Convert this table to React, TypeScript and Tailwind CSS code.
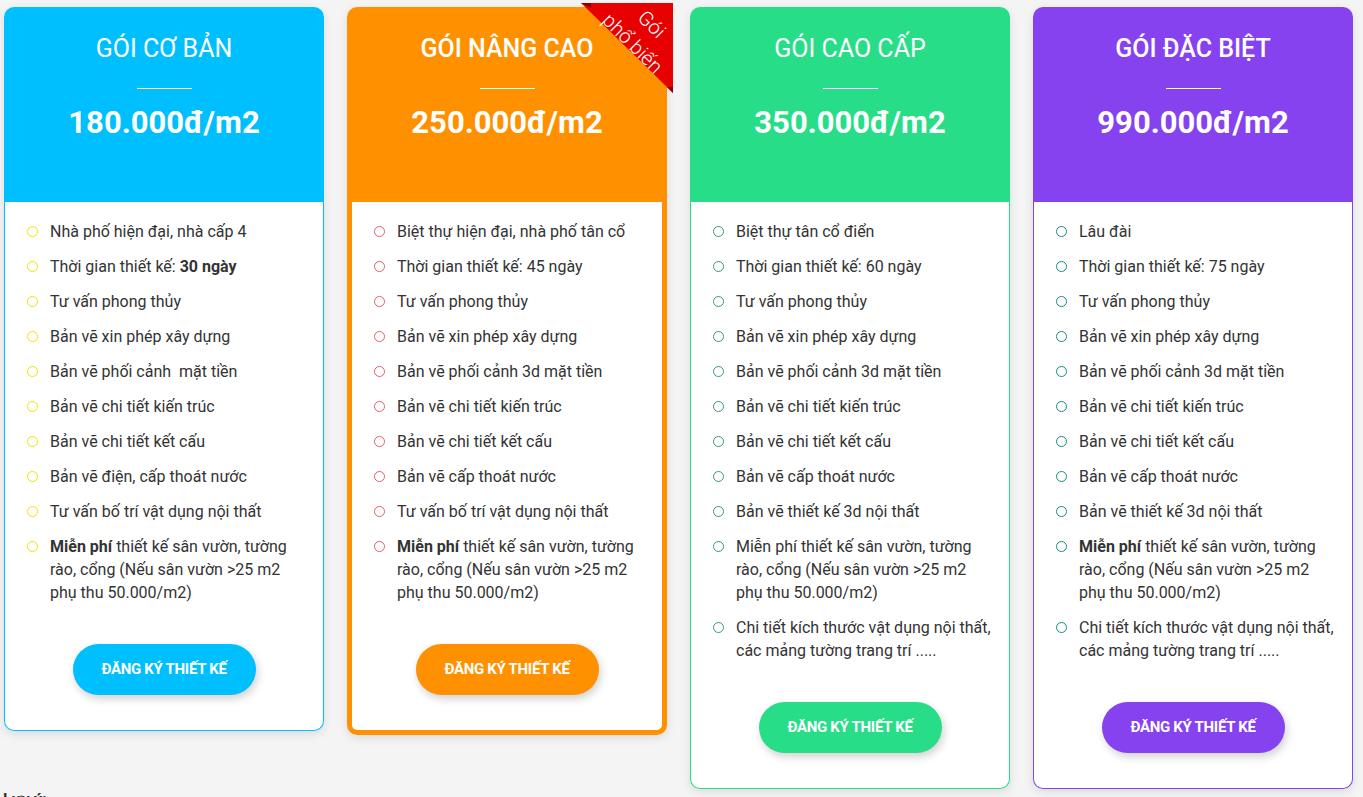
import React from "react";

type Plan = {
  title: string;
  price: string;
  titleWeight: string;
  header: string;
  border: string;
  bullet: string;
  button: string;
  featured?: boolean;
  items: React.ReactNode[];
};

const freeGarden = (bold: boolean) => (
  <>
    {bold ? <b className="font-bold">Miễn phí</b> : "Miễn phí"} thiết kế sân vườn, tường
    <br />
    rào, cổng (Nếu sân vườn &gt;25 m2
    <br />
    phụ thu 50.000/m2)
  </>
);

const detail = "Chi tiết kích thước vật dụng nội thất, các mảng tường trang trí .....";

const plans: Plan[] = [
  {
    title: "GÓI CƠ BẢN",
    price: "180.000đ/m2",
    titleWeight: "font-normal",
    header: "bg-[#00bfff]",
    border: "border border-t-0 border-[#00bfff]",
    bullet: "border-[#f2e400]",
    button: "bg-[#00bfff]",
    items: [
      "Nhà phố hiện đại, nhà cấp 4",
      <>
        Thời gian thiết kế: <b className="font-bold">30 ngày</b>
      </>,
      "Tư vấn phong thủy",
      "Bản vẽ xin phép xây dựng",
      "Bản vẽ phối cảnh\u00a0 mặt tiền",
      "Bản vẽ chi tiết kiến trúc",
      "Bản vẽ chi tiết kết cấu",
      "Bản vẽ điện, cấp thoát nước",
      "Tư vấn bố trí vật dụng nội thất",
      freeGarden(true),
    ],
  },
  {
    title: "GÓI NÂNG CAO",
    price: "250.000đ/m2",
    titleWeight: "font-medium",
    header: "bg-[#ff9100]",
    border: "border-[5px] border-t-0 border-[#ff9100]",
    bullet: "border-[#e0606c]",
    button: "bg-[#ff9100]",
    featured: true,
    items: [
      "Biệt thự hiện đại, nhà phố tân cổ",
      "Thời gian thiết kế: 45 ngày",
      "Tư vấn phong thủy",
      "Bản vẽ xin phép xây dựng",
      "Bản vẽ phối cảnh 3d mặt tiền",
      "Bản vẽ chi tiết kiến trúc",
      "Bản vẽ chi tiết kết cấu",
      "Bản vẽ cấp thoát nước",
      "Tư vấn bố trí vật dụng nội thất",
      freeGarden(true),
    ],
  },
  {
    title: "GÓI CAO CẤP",
    price: "350.000đ/m2",
    titleWeight: "font-normal",
    header: "bg-[#28dd88]",
    border: "border border-t-0 border-[#28dd88]",
    bullet: "border-[#3a9a6c]",
    button: "bg-[#28dd88]",
    items: [
      "Biệt thự tân cổ điển",
      "Thời gian thiết kế: 60 ngày",
      "Tư vấn phong thủy",
      "Bản vẽ xin phép xây dựng",
      "Bản vẽ phối cảnh 3d mặt tiền",
      "Bản vẽ chi tiết kiến trúc",
      "Bản vẽ chi tiết kết cấu",
      "Bản vẽ cấp thoát nước",
      "Bản vẽ thiết kế 3d nội thất",
      freeGarden(false),
      detail,
    ],
  },
  {
    title: "GÓI ĐẶC BIỆT",
    price: "990.000đ/m2",
    titleWeight: "font-medium",
    header: "bg-[#8642ee]",
    border: "border border-t-0 border-[#8642ee]",
    bullet: "border-[#178c7a]",
    button: "bg-[#8642ee]",
    items: [
      "Lâu đài",
      "Thời gian thiết kế: 75 ngày",
      "Tư vấn phong thủy",
      "Bản vẽ xin phép xây dựng",
      "Bản vẽ phối cảnh 3d mặt tiền",
      "Bản vẽ chi tiết kiến trúc",
      "Bản vẽ chi tiết kết cấu",
      "Bản vẽ cấp thoát nước",
      "Bản vẽ thiết kế 3d nội thất",
      freeGarden(true),
      detail,
    ],
  },
];

function Ribbon() {
  return (
    <div className="absolute -top-[4px] -right-[6px] w-[92px] h-[90px] z-10">
      <div className="absolute inset-0 bg-[#e60000] [clip-path:polygon(0_0,100%_0,100%_100%)]" />
      <div className="absolute left-0 top-0 w-[10px] h-[5px] bg-[#8a0000] [clip-path:polygon(0_0,100%_100%,100%_0)]" />
      <div className="absolute right-0 bottom-0 w-[6px] h-[6px] bg-[#8a0000] [clip-path:polygon(0_0,100%_0,100%_100%)]" />
      <div className="absolute left-[1px] top-[4px] w-[120px] rotate-45 text-center text-white text-[20px] font-light leading-[27px]">
        Gói
        <br />
        phổ biến
      </div>
    </div>
  );
}

function PlanCard({ plan }: { plan: Plan }) {
  return (
    <div className="relative w-[320px] shrink-0 rounded-[10px] shadow-[0_3px_10px_rgba(0,0,0,0.1)]">
      {plan.featured && <Ribbon />}
      <div className={`${plan.header} h-[195px] rounded-t-[10px] pt-[27px] flex flex-col items-center text-white`}>
        <h2 className={`text-[25px] leading-[30px] ${plan.titleWeight}`}>{plan.title}</h2>
        <div className="mt-[24px] h-px w-[55px] bg-white" />
        <div className="mt-[14px] text-[31px] leading-[40px] font-bold">{plan.price}</div>
      </div>
      <div className={`${plan.border} bg-white rounded-b-[10px] pl-[22px] pt-[18px] pb-[35px]`}>
        <ul className="flex flex-col gap-[12px]">
          {plan.items.map((item, i) => (
            <li key={i} className="flex items-start gap-[12px] text-[16px] leading-[23px] text-[#333]">
              <span className={`mt-[6px] w-[11px] h-[11px] shrink-0 rounded-full border-[1.5px] ${plan.bullet}`} />
              <span className="w-[262px]">{item}</span>
            </li>
          ))}
        </ul>
        <div className="mt-[40px] flex justify-center pr-[22px]">
          <button
            className={`${plan.button} h-[51px] w-[183px] rounded-full text-white text-[15px] font-bold tracking-[-0.3px] shadow-[2px_4px_8px_rgba(0,0,0,0.18)]`}
          >
            ĐĂNG KÝ THIẾT KẾ
          </button>
        </div>
      </div>
    </div>
  );
}

export default function App() {
  return (
    <div className="min-h-screen bg-[#f4f4f4] font-['Roboto','Liberation_Sans',sans-serif]">
      <div className="flex items-start gap-[23px] px-[4px] pt-[7px]">
        {plans.map((p) => (
          <PlanCard key={p.title} plan={p} />
        ))}
      </div>
      <p className="mt-[1px] px-[3px] text-[16px] leading-[20px] font-bold text-[#333]">Lưu ý:</p>
    </div>
  );
}
